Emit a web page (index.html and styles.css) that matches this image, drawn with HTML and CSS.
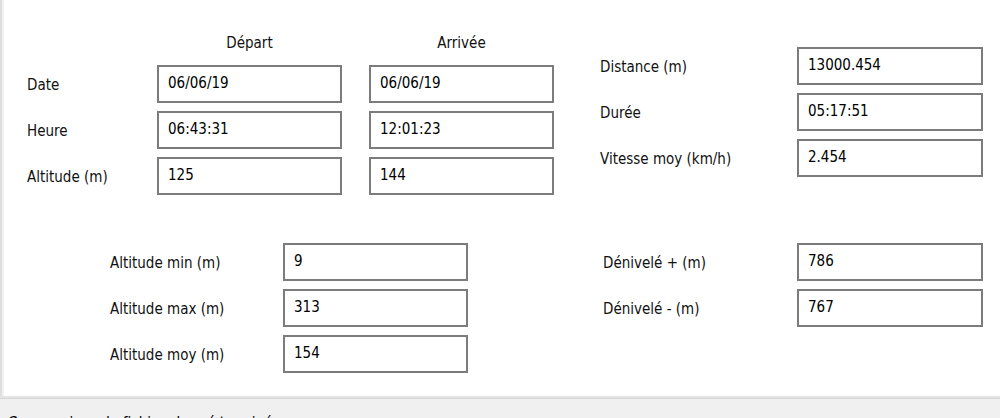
FILE: index.html
```html
<!DOCTYPE html>
<html lang="fr">
<head>
    <meta charset="UTF-8">
    <title>Résumé de la trace</title>
    <link rel="stylesheet" href="styles.css">
</head>
<body>
    <div class="panel">
        <div class="top">
            <div class="trip">
                <span></span>
                <div class="col-title">Départ</div>
                <div class="col-title">Arrivée</div>

                <label class="lbl">Date</label>
                <input class="box" type="text" value="06/06/19" readonly>
                <input class="box" type="text" value="06/06/19" readonly>

                <label class="lbl">Heure</label>
                <input class="box" type="text" value="06:43:31" readonly>
                <input class="box" type="text" value="12:01:23" readonly>

                <label class="lbl">Altitude (m)</label>
                <input class="box" type="text" value="125" readonly>
                <input class="box" type="text" value="144" readonly>
            </div>

            <div class="stats">
                <label class="lbl">Distance (m)</label>
                <input class="box" type="text" value="13000.454" readonly>

                <label class="lbl">Durée</label>
                <input class="box" type="text" value="05:17:51" readonly>

                <label class="lbl">Vitesse moy (km/h)</label>
                <input class="box" type="text" value="2.454" readonly>
            </div>
        </div>

        <div class="bottom">
            <div class="alti">
                <label class="lbl">Altitude min (m)</label>
                <input class="box" type="text" value="9" readonly>

                <label class="lbl">Altitude max (m)</label>
                <input class="box" type="text" value="313" readonly>

                <label class="lbl">Altitude moy (m)</label>
                <input class="box" type="text" value="154" readonly>
            </div>

            <div class="deniv">
                <label class="lbl">Dénivelé + (m)</label>
                <input class="box" type="text" value="786" readonly>

                <label class="lbl">Dénivelé - (m)</label>
                <input class="box" type="text" value="767" readonly>
            </div>
        </div>
    </div>

    <div class="status">Comparaison du fichier chargé terminée</div>
</body>
</html>
```

FILE: styles.css
```css
html, body {
    margin: 0;
    height: 418px;
    overflow: hidden;
}
body {
    background-color: #f0f0f0;
    font-family: "DejaVu Sans Condensed", "DejaVu Sans", sans-serif;
    font-stretch: condensed;
    font-size: 15px;
    color: #111;
}
.panel {
    background: white;
    height: 398px;
    box-sizing: border-box;
    box-shadow: inset 2px 0 0 #dedede, inset 4px 0 0 #f1f1f1;
    border-bottom: 2px solid #e4e4e4;
}
.top {
    display: flex;
    align-items: flex-start;
    padding-top: 32px;
}
.trip {
    display: grid;
    grid-template-columns: 103px 185px 185px;
    grid-template-rows: 25px repeat(3, 38px);
    column-gap: 27px;
    row-gap: 8px;
    margin-left: 27px;
}
.trip .col-title {
    align-self: start;
    text-align: center;
    line-height: 22px;
}
.stats {
    display: grid;
    grid-template-columns: 197px 186px;
    grid-auto-rows: 38px;
    row-gap: 8px;
    margin-left: 46px;
    margin-top: 15px;
}
.bottom {
    display: flex;
    align-items: flex-start;
    margin-top: 48px;
}
.alti {
    display: grid;
    grid-template-columns: 173px 185px;
    grid-auto-rows: 38px;
    row-gap: 8px;
    margin-left: 110px;
}
.deniv {
    display: grid;
    grid-template-columns: 194px 186px;
    grid-auto-rows: 38px;
    row-gap: 8px;
    margin-left: 135px;
}
.lbl {
    align-self: center;
    padding-top: 2px;
    white-space: nowrap;
}
.box {
    width: 100%;
    height: 38px;
    box-sizing: border-box;
    margin: 0;
    border: 2px solid #7c7c7c;
    padding: 0 0 3px 9px;
    background: white;
    font: inherit;
    color: #000;
    outline: none;
}
.status {
    border-top: 1px solid #d6d6d6;
    padding: 15px 8px 0;
    white-space: nowrap;
    color: #000;
}
```
